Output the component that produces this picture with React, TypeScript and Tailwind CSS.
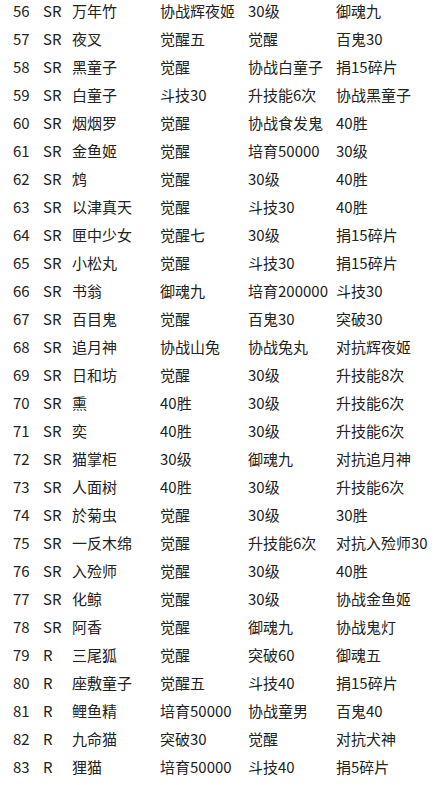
const rows: [string, string, string, string, string, string][] = [
  ['56', 'SR', '万年竹', '协战辉夜姬', '30级', '御魂九'],
  ['57', 'SR', '夜叉', '觉醒五', '觉醒', '百鬼30'],
  ['58', 'SR', '黑童子', '觉醒', '协战白童子', '捐15碎片'],
  ['59', 'SR', '白童子', '斗技30', '升技能6次', '协战黑童子'],
  ['60', 'SR', '烟烟罗', '觉醒', '协战食发鬼', '40胜'],
  ['61', 'SR', '金鱼姬', '觉醒', '培育50000', '30级'],
  ['62', 'SR', '鸩', '觉醒', '30级', '40胜'],
  ['63', 'SR', '以津真天', '觉醒', '斗技30', '40胜'],
  ['64', 'SR', '匣中少女', '觉醒七', '30级', '捐15碎片'],
  ['65', 'SR', '小松丸', '觉醒', '斗技30', '捐15碎片'],
  ['66', 'SR', '书翁', '御魂九', '培育200000', '斗技30'],
  ['67', 'SR', '百目鬼', '觉醒', '百鬼30', '突破30'],
  ['68', 'SR', '追月神', '协战山兔', '协战兔丸', '对抗辉夜姬'],
  ['69', 'SR', '日和坊', '觉醒', '30级', '升技能8次'],
  ['70', 'SR', '熏', '40胜', '30级', '升技能6次'],
  ['71', 'SR', '奕', '40胜', '30级', '升技能6次'],
  ['72', 'SR', '猫掌柜', '30级', '御魂九', '对抗追月神'],
  ['73', 'SR', '人面树', '40胜', '30级', '升技能6次'],
  ['74', 'SR', '於菊虫', '觉醒', '30级', '30胜'],
  ['75', 'SR', '一反木绵', '觉醒', '升技能6次', '对抗入殓师30'],
  ['76', 'SR', '入殓师', '觉醒', '30级', '40胜'],
  ['77', 'SR', '化鲸', '觉醒', '30级', '协战金鱼姬'],
  ['78', 'SR', '阿香', '觉醒', '御魂九', '协战鬼灯'],
  ['79', 'R', '三尾狐', '觉醒', '突破60', '御魂五'],
  ['80', 'R', '座敷童子', '觉醒五', '斗技40', '捐15碎片'],
  ['81', 'R', '鲤鱼精', '培育50000', '协战童男', '百鬼40'],
  ['82', 'R', '九命猫', '突破30', '觉醒', '对抗犬神'],
  ['83', 'R', '狸猫', '培育50000', '斗技40', '捐5碎片'],
];

export default function App() {
  return (
    <div className="h-[785px] w-[443px] overflow-hidden bg-white font-['Noto_Sans_CJK_SC','Noto_Sans',sans-serif] text-[15px] text-[#222]">
      <div className="-mt-[3px] pl-[13px]">
        {rows.map((r) => (
          <div key={r[0]} className="grid h-7 grid-cols-[30px_29px_88px_88px_88px_1fr] items-center whitespace-nowrap leading-7">
            {r.map((c, i) => (
              <span key={i}>{c}</span>
            ))}
          </div>
        ))}
      </div>
    </div>
  );
}
